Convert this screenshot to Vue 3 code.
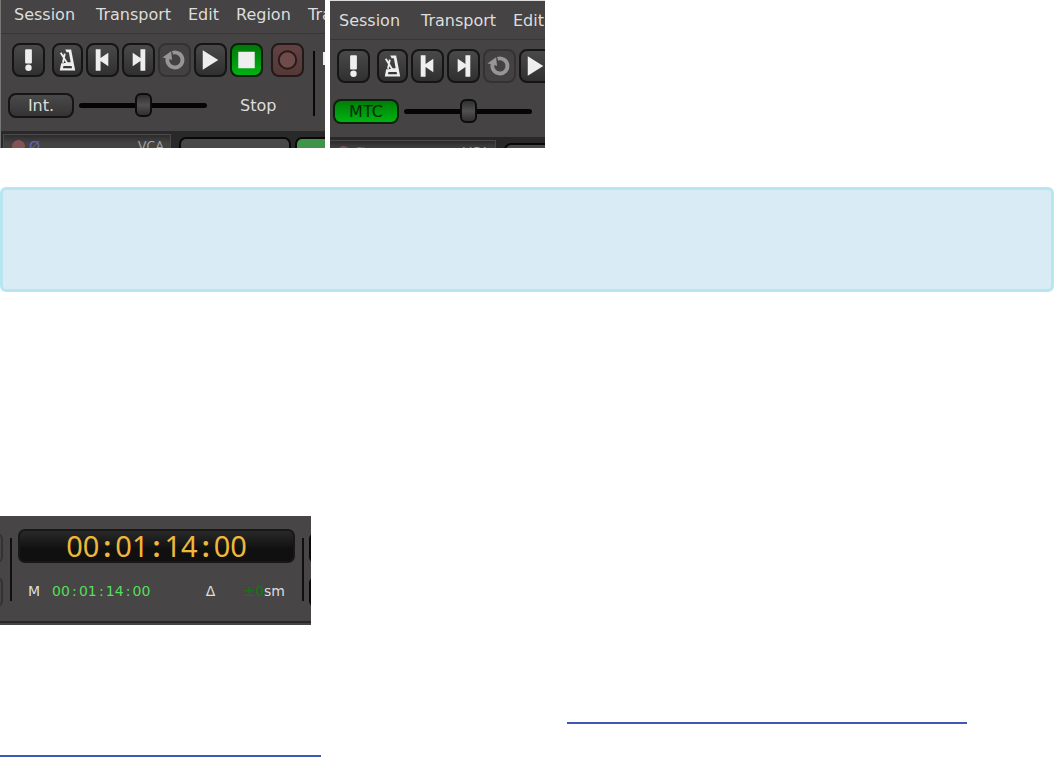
<script setup>
import { ref } from 'vue'

const screens = ref([
  { id: 'int', sync: 'Int.', active: false, speed: 50, menus: ['Session', 'Transport', 'Edit', 'Region', 'Tra'] },
  { id: 'mtc', sync: 'MTC', active: true, speed: 50, menus: ['Session', 'Transport', 'Edit'] },
])
const tools = ['Panic', 'Metronome', 'Start', 'End', 'Loop', 'Play', 'Stop', 'Record']
const clock = ['00', '01', '14', '00']
</script>

<template>
  <main class="page">
    <div class="figures">
      <section v-for="s in screens" :key="s.id" class="shot" :class="s.id">
        <div class="mixer">
          <nav class="menu">
            <button v-for="m in s.menus" :key="m" type="button">{{ m }}</button>
          </nav>
          <div class="deck">
            <div class="controls">
              <div class="tools">
                <button v-for="t in tools" :key="t" type="button" class="tool" :class="t.toLowerCase()" :aria-label="t">
                  <svg viewBox="0 0 32 32" aria-hidden="true">
                    <g v-if="t === 'Panic'" class="ink"><rect x="12.500" y="5" width="7" height="14.500" rx="1" /><circle cx="16" cy="24" r="3.300" /></g>
                    <g v-else-if="t === 'Metronome'">
                      <path class="ink" fill-rule="evenodd" d="M13.500 4.500h6.500l4.500 23H7.500l1.500-8h3l4-1h3.500l-2-11h-2.500zM11.500 22.500l-.5 2.500h10l-.5-2.500z" />
                      <path class="stroke" d="M8.500 8l7.500 12M11 19l2-10" />
                    </g>
                    <g v-else-if="t === 'Start'" class="ink"><path d="M9 5h5v9l8-5.500v14L14 17v10H9z" /></g>
                    <g v-else-if="t === 'End'" class="ink"><path d="M23 5h-5v9l-8-5.500v14L18 17v10h5z" /></g>
                    <g v-else-if="t === 'Loop'">
                      <path class="ring" d="M9 13.500a7.800 7.800 0 1 0 5-5" />
                      <path class="tip" d="M3.500 13.500l9-6.500 1 9-4-1.500z" />
                    </g>
                    <path v-else-if="t === 'Play'" class="ink" d="M8 6l16 10L8 26z" />
                    <rect v-else-if="t === 'Stop'" class="ink" x="7.500" y="7.500" width="17" height="17" />
                    <circle v-else class="record-ring" cx="16" cy="16" r="9" />
                  </svg>
                </button>
              </div>
              <div class="speed">
                <button type="button" class="sync" :class="{ active: s.active }">{{ s.sync }}</button>
                <input v-model="s.speed" type="range" min="0" max="100" aria-label="Shuttle speed">
                <span v-if="!s.active" class="state">Stop</span>
              </div>
            </div>
            <i class="rule"></i>
            <i class="cut"></i>
          </div>
          <div class="tracks">
            <div class="strip"><i class="dot"></i><span class="phase">Ø</span><span class="vca">VCA</span></div>
            <i class="slot"></i>
            <i class="slot green"></i>
          </div>
        </div>
      </section>
    </div>

    <aside class="notice"></aside>

    <section class="clock">
      <div class="row">
        <div class="edge"><i></i><i></i></div>
        <i class="bar"></i>
        <div class="times">
          <div class="big"><template v-for="(c, i) in clock" :key="i"><b v-if="i">:</b>{{ c }}</template></div>
          <div class="small">
            <span class="m">M</span>
            <span class="green-time"><template v-for="(c, i) in clock" :key="i"><b v-if="i">:</b>{{ c }}</template></span>
            <span class="delta">Δ</span>
            <span class="unit"><em>±0</em>sm</span>
          </div>
        </div>
        <i class="bar"></i>
        <div class="edge right"><i></i><i></i></div>
      </div>
    </section>

    <p class="links">
      <a href="#sync" class="upper" aria-label="Timecode synchronization"></a>
      <a href="#sync" class="lower" aria-label="Timecode synchronization, continued"></a>
    </p>
  </main>
</template>

<style>
body { margin: 0; background: #fff; }
</style>

<style scoped>
.page, .page * { box-sizing: border-box; }
.page { font-family: "DejaVu Sans", sans-serif; font-size: 16px; color: #ddd; }
button { font: inherit; color: inherit; padding: 0; margin: 0; border: 0; background: none; }
i, b, em { display: block; font-style: normal; font-weight: normal; }

.figures { display: flex; align-items: flex-start; gap: 5px; }
.shot { height: 148px; overflow: hidden; background: #454343; }
.int { flex: 0 0 325px; border-left: 1px solid #777; }
.mtc { flex: 0 0 215px; border-top: 1px solid #ddd; padding-top: 5px; }
.mixer { width: 324px; }
.mtc .mixer { margin-left: -4px; }
.menu { display: grid; grid-template-columns: 82px 92px 48px 72px 30px; justify-items: start; height: 34px; padding: 0 0 4px 13px; border-bottom: 1px solid #383636; }
.menu button { line-height: 29px; }

.deck { display: flex; height: 97px; overflow: hidden; }
.controls { flex: none; width: 312px; padding: 9px 0 0 7px; }
.tools { display: flex; gap: 3px; padding-left: 4px; }
.tool { flex: none; width: 33px; height: 34px; border: 2px solid #151515; border-radius: 8px; background: linear-gradient(#494949, #303030); }
.tool svg { display: block; width: 31px; height: 32px; margin: -1px; }
.panic { margin-right: 4px; }
.metronome { width: 31px; }
.metronome svg { width: 29px; }
.loop { border-color: #343232; background: #434141; }
.stop { border-color: #0b210c; background: linear-gradient(#007709, #00b412); }
.record { margin-left: 5px; border-color: #241919; background: linear-gradient(#624141, #543939); }
.ink { fill: #eee; }
.stroke { fill: none; stroke: #eee; stroke-width: 2; }
.ring { fill: none; stroke: #969696; stroke-width: 4; }
.tip { fill: #969696; }
.record-ring { fill: #704b4b; stroke: #281919; stroke-width: 2; }

.speed { display: flex; align-items: center; height: 26px; margin-top: 15px; }
.sync { flex: none; width: 66px; height: 25px; border: 2px solid #151515; border-radius: 8px; background: linear-gradient(#4a4a4a, #343434); line-height: 21px; }
.sync.active { border-color: #0b210c; background: linear-gradient(#007d09, #00b412); color: #042c06; }
input { appearance: none; flex: none; width: 128px; height: 24px; margin: 0 0 0 5px; background: none; }
input::-webkit-slider-runnable-track { height: 5px; border-radius: 3px; background: #050505; }
input::-webkit-slider-thumb { appearance: none; width: 17px; height: 24px; margin-top: -10px; border: 2px solid #0d0d0d; border-radius: 6px; background: linear-gradient(#303030, #505050 50%, #303030); }
.state { margin-left: 33px; }
.rule { flex: none; width: 2px; height: 65px; margin-top: 17px; background: #080808; }
.cut { flex: none; width: 4px; height: 13px; margin: 18px 0 0 8px; background: #eee; }

.tracks { display: flex; align-items: flex-start; height: 24px; padding: 3px 0 0 2px; background: #292929; }
.strip { flex: none; display: flex; width: 168px; height: 22px; padding: 3px 6px 0 8px; border: 1px solid #4a4a4a; background: linear-gradient(#2c2b2b, #454242 8px); font-size: 14px; line-height: 16px; }
.dot { width: 13px; height: 13px; margin-top: 2px; border-radius: 50%; background: #855355; }
.phase { margin-left: 4px; color: #6464b5; }
.vca { margin-left: auto; color: #a5a5a5; font-family: "Open Sans", sans-serif; font-size: 14px; }
.slot { flex: none; width: 112px; height: 24px; margin: 3px 0 0 8px; border: 2px solid #080808; border-radius: 7px; background: #484848; }
.slot.green { margin-left: 4px; background: #40944a; }

.notice { height: 105px; margin-top: 39px; border: 3px solid #b8e6f0; border-radius: 6px; background: #d9ecf6; }

.clock { width: 311px; height: 109px; margin-top: 224px; padding-top: 13px; overflow: hidden; background: linear-gradient(#474545 105px, #292828 105px, #292828 107px, #454343 107px); }
.row { display: flex; }
.edge { flex: none; display: flex; flex-direction: column; gap: 14px; width: 3px; margin-top: 4px; overflow: hidden; align-items: flex-end; }
.edge i { flex: none; width: 20px; height: 30px; border: 2px solid #333131; border-radius: 6px; }
.edge.right { margin-left: 5px; align-items: flex-start; }
.edge.right i { border-color: #080808; background: #080808; }
.bar { flex: none; width: 2px; height: 63px; margin: 9px 0 0 7px; background: #101010; }
.times { flex: none; width: 277px; margin-left: 6px; }
.times + .bar { margin-left: 7px; }
.big { display: flex; justify-content: center; height: 34px; border: 2px solid #181818; border-radius: 7px; background: linear-gradient(#292929, #101010 60%); color: #edb83c; font-family: "Noto Sans", sans-serif; font-size: 29px; line-height: 30px; }
.big b { width: 16px; text-align: center; font-weight: 600; }
.small { display: flex; margin-top: 18px; padding: 0 10px; font-size: 14px; line-height: 20px; }
.green-time { display: flex; margin-left: 12px; color: #55df5a; }
.green-time b { width: 9px; text-align: center; }
.delta { margin-left: auto; }
.unit { display: flex; margin-left: 28px; }
.unit em { color: #107a10; }

.links { display: flex; flex-direction: column; gap: 31px; margin: 97px 0 0; }
.links a { display: block; height: 2px; background: #3f59b3; }
.upper { width: 400px; margin-left: 567px; }
.lower { width: 321px; }
</style>
